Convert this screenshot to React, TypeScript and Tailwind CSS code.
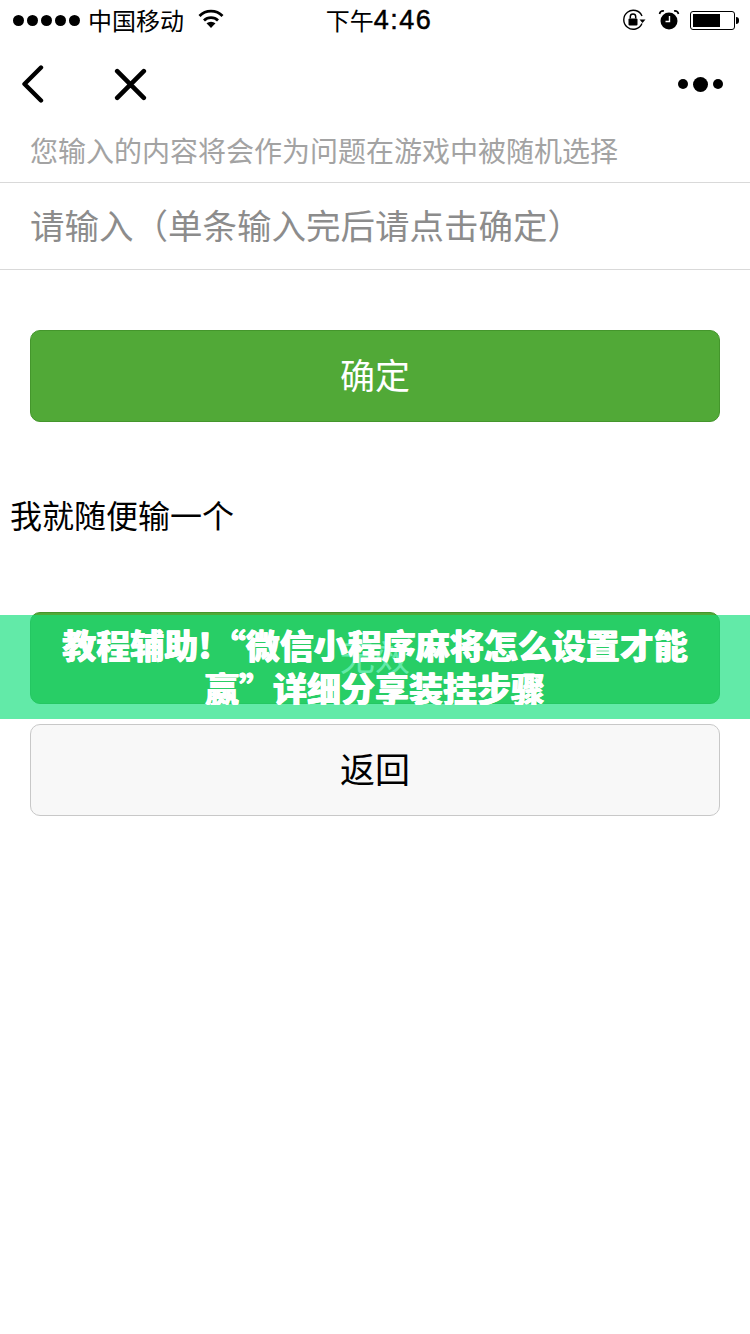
import React from 'react'

const cjk = "font-['Noto_Sans_CJK_SC','Liberation_Sans',sans-serif]"

const StatusBar = () => {
  return (
    <div className="h-10 grid grid-cols-3 items-center text-black">
      {/* LEFT */}
      <div className="flex items-center pl-[13px]">
        <div className="flex gap-[3px]">
          <span className="w-[11px] h-[11px] rounded-full bg-black" />
          <span className="w-[11px] h-[11px] rounded-full bg-black" />
          <span className="w-[11px] h-[11px] rounded-full bg-black" />
          <span className="w-[11px] h-[11px] rounded-full bg-black" />
          <span className="w-[11px] h-[11px] rounded-full bg-black" />
        </div>
        <span className="ml-[8px] text-[24px] leading-none whitespace-nowrap">中国移动</span>
        <svg className="ml-[14px] mb-[3px] shrink-0" width="26" height="20" viewBox="0 0 26 20">
          <path d="M1.5 7 A16 16 0 0 1 24.5 7" fill="none" stroke="#000" strokeWidth="2.8" />
          <path d="M6 11.5 A10 10 0 0 1 20 11.5" fill="none" stroke="#000" strokeWidth="2.8" />
          <path d="M8.5 14.3 A7 7 0 0 1 17.5 14.3 L13 19 Z" fill="#000" />
        </svg>
      </div>
      {/* CENTER */}
      <div className="flex justify-center items-center whitespace-nowrap pl-[8px]">
        <span className="text-[24px] leading-none">下午</span>
        <span className="text-[27px] leading-none tracking-[1.5px] font-['Liberation_Sans',sans-serif] [-webkit-text-stroke:0.5px_black]">4:46</span>
      </div>
      {/* RIGHT */}
      <div className="flex items-center justify-end pr-[11px]">
        <svg width="24" height="22" viewBox="0 0 24 22">
          <path d="M20 14.5 A9.5 9.5 0 1 1 20 7" fill="none" stroke="#000" strokeWidth="1.4" />
          <path d="M17.5 10.5 H23.5 L20.5 14 Z" fill="#000" />
          <rect x="6.5" y="9.5" width="9" height="7" rx="1" fill="#000" />
          <path d="M8.3 9.5 V7.6 A2.7 2.7 0 0 1 13.7 7.6 V9.5" fill="none" stroke="#000" strokeWidth="1.5" />
        </svg>
        <svg className="ml-[12px]" width="22" height="22" viewBox="0 0 22 22">
          <circle cx="11" cy="12" r="8.5" fill="#000" />
          <path d="M11.5 7 V12.5 H7.5" fill="none" stroke="#fff" strokeWidth="1.4" />
          <path d="M1.5 5 A4 4 0 0 1 6 2 M20.5 5 A4 4 0 0 0 16 2" fill="none" stroke="#000" strokeWidth="1.6" />
        </svg>
        <div className="ml-[10px] flex items-center">
          <div className="w-[45px] h-[19px] border border-black rounded-[3px] p-[2px]">
            <div className="w-[27px] h-full bg-black" />
          </div>
          <span className="ml-[1px] w-[3px] h-[7px] bg-black rounded-r-full" />
        </div>
      </div>
    </div>
  )
}

const NavBar = () => {
  return (
    <div className="h-[88px] flex items-center justify-between pl-[21px] pr-[27px]">
      <div className="flex items-center">
        <svg width="24" height="38" viewBox="0 0 24 38">
          <path d="M20 2.5 L3.5 19 L20 35.5" fill="none" stroke="#000" strokeWidth="4.4" strokeLinecap="round" strokeLinejoin="round" />
        </svg>
        <svg className="ml-[68px]" width="34" height="34" viewBox="0 0 34 34">
          <path d="M4.2 4.2 L30.8 30.8 M30.8 4.2 L4.2 30.8" fill="none" stroke="#000" strokeWidth="4.6" strokeLinecap="round" />
        </svg>
      </div>
      <div className="flex items-center gap-[5px]">
        <span className="w-[10px] h-[10px] rounded-full bg-black" />
        <span className="w-[15px] h-[15px] rounded-full bg-black" />
        <span className="w-[10px] h-[10px] rounded-full bg-black" />
      </div>
    </div>
  )
}

const App = () => {
  return (
    <div className={`relative w-[750px] h-[1334px] bg-white overflow-hidden ${cjk}`}>
      <StatusBar />
      <NavBar />

      {/* FORM */}
      <div className="h-[55px] pl-[30px] pb-[11px] flex items-center border-b border-[#d9d9d9] text-[28px] text-[#a3a3a3] whitespace-nowrap">
        您输入的内容将会作为问题在游戏中被随机选择
      </div>
      <div className="h-[87px] pl-[30px] pb-[3px] flex items-center border-b border-[#d9d9d9] text-[34.5px] text-[#8c8c8c] whitespace-nowrap">
        请输入（单条输入完后请点击确定）
      </div>

      <div className="px-[30px] pt-[60px]">
        <button className="w-full h-[92px] pb-[4px] rounded-[10px] bg-[#51a937] border border-[#44962c] text-white text-[35px]">
          确定
        </button>
      </div>

      <p className="mt-[70px] pl-[10px] h-[50px] text-[32px] leading-[45px] text-black">我就随便输一个</p>

      <div className="px-[30px] pt-[70px] flex flex-col gap-[20px]">
        <button className="w-full h-[92px] pb-[4px] rounded-[10px] bg-[#51a937] border border-[#44962c] text-white text-[35px]">
          无效
        </button>
        <button className="w-full h-[92px] pb-[4px] rounded-[10px] bg-[#f8f8f8] border border-[#c8c8c8] text-black text-[35px]">
          返回
        </button>
      </div>

      {/* OVERLAY BANNER */}
      <div className="absolute left-0 top-[615px] w-full h-[104px] bg-[#15e07d]/67 px-[50px]">
        <div className="h-[90px] overflow-hidden pt-[8px] text-center text-white text-[34px] leading-[43px] font-black [text-shadow:0.4px_0_0_white,-0.4px_0_0_white]">
          教程辅助!“微信小程序麻将怎么设置才能赢”详细分享装挂步骤
        </div>
      </div>
    </div>
  )
}

export default App
